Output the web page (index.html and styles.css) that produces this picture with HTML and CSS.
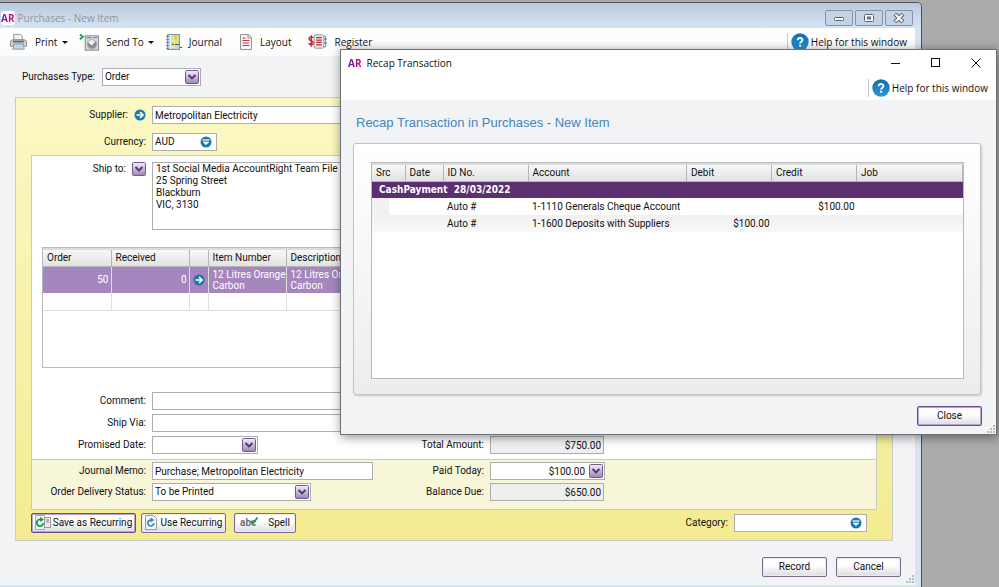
FILE: index.html
```html
<!DOCTYPE html>
<html lang="en">
<head>
<meta charset="utf-8">
<title>Purchases - New Item</title>
<link rel="stylesheet" href="styles.css">
</head>
<body>
<svg width="0" height="0" class="defs" aria-hidden="true">
  <defs>
    <linearGradient id="purple" x1="0" y1="0" x2="0" y2="1"><stop offset="0" stop-color="#f3eef8"/><stop offset="1" stop-color="#9d84b4"/></linearGradient>
    <linearGradient id="blue" x1="0" y1="0" x2="0" y2="1"><stop offset="0" stop-color="#0a6fb4"/><stop offset="1" stop-color="#2f95cf"/></linearGradient>
    <symbol id="chev" viewBox="0 0 14 14"><rect x=".5" y=".5" width="13" height="13" rx="1" fill="url(#purple)" stroke="#745b8e"/><path d="M3.500 5l3.500 3.500L10.500 5" fill="none" stroke="#4f3370" stroke-width="1.800"/></symbol>
    <symbol id="drop" viewBox="0 0 12 12"><circle cx="6" cy="6" r="5.500" fill="#1f78ad"/><path d="M2.500 4h7" stroke="#fff" stroke-width="1.200"/><path d="M3.200 6h5.600L6 8.800z" fill="#fff" stroke="#fff" stroke-width=".6"/></symbol>
    <symbol id="go" viewBox="0 0 12 12"><circle cx="6" cy="6" r="5.500" fill="#1f78ad"/><path d="M2.500 6h6M6 3l3 3-3 3" fill="none" stroke="#fff" stroke-width="1.700"/></symbol>
    <symbol id="help" viewBox="0 0 18 18"><circle cx="9" cy="9" r="8.700" fill="url(#blue)"/><path d="M6.700 7.200c.1-3 4.800-2.900 4.700-.2 0 1.700-2.300 1.700-2.300 3.600" fill="none" stroke="#fff" stroke-width="1.900"/><rect x="8.100" y="11.700" width="2" height="2" fill="#fff"/></symbol>
    <symbol id="grip" viewBox="0 0 8 8"><path d="M6 0h2v2H6zM3 3h2v2H3zM6 3h2v2H6zM0 6h2v2H0zM3 6h2v2H3zM6 6h2v2H6z" fill="#b9bbbd"/></symbol>
  </defs>
</svg>

<main class="window">
  <header class="titlebar">
    <span class="brand tile">AR</span>
    <h1>Purchases - New Item</h1>
    <div class="wincontrols">
      <button aria-label="Minimise"><svg width="12" height="10" viewBox="0 0 12 10"><rect x="1.500" y="4.500" width="9" height="3" rx="1" fill="#fff" stroke="#56606e"/></svg></button>
      <button aria-label="Maximise"><svg width="12" height="10" viewBox="0 0 12 10"><rect x="1.500" y="1.500" width="9" height="7" rx="1" fill="#fff" stroke="#56606e"/><rect x="4.500" y="4" width="3" height="2" fill="#8b98aa" stroke="#56606e"/></svg></button>
      <button aria-label="Close window"><svg width="12" height="10" viewBox="0 0 12 10"><path d="M2 1l8 8m0-8l-8 8" stroke="#56606e" stroke-width="4"/><path d="M2.500 1.500l7 7m0-7l-7 7" stroke="#fff" stroke-width="2"/></svg></button>
    </div>
  </header>

  <nav class="toolbar">
    <button class="menu"><svg width="19" height="18" viewBox="0 0 20 18"><path d="M5 7V1h7l2 2v4" fill="#f4f4f4" stroke="#8b8d8f"/><path d="M1.500 13.500V8L4 6.500h12L18.500 8v5.500z" fill="#d3d4d5" stroke="#8b8d90"/><path d="M4 8.500h12" stroke="#66696c" stroke-width="2"/><path d="M5 11h10l1 5.500H4z" fill="#b9d8ee" stroke="#8796a2"/></svg>Print<i class="caret"></i></button>
    <button class="menu send"><svg width="21" height="19" viewBox="0 0 22 19"><path d="M1 1l3 2.500L1 6" fill="none" stroke="#1aa34a" stroke-width="2"/><rect x="6.500" y="2.500" width="14" height="15" fill="#d9dadb" stroke="#85878a"/><path d="M8 4.500h5m2 0h4" stroke="#6d7073"/><circle cx="13.500" cy="11.500" r="5" fill="#eee" stroke="#a2a4a6"/><path d="M9 9l4 3 5-4c1 5-1 8-4.500 8S9 13 9 9z" fill="#8b8d90"/><circle cx="13.500" cy="10.500" r="1.500" fill="#fff"/></svg>Send To<i class="caret"></i></button>
    <button><svg width="17" height="18" viewBox="0 0 17 18"><rect x="2.500" y="1.500" width="12" height="15" fill="#b5dfe6" stroke="#7d989f"/><path d="M5.500 2v14" stroke="#f6fafa"/><path d="M1 3.500h3M1 6.500h3M1 9.500h3M1 12.500h3M1 15.500h3" stroke="#85878a"/><path d="M7 5h3M7 8h3M7 14h3" stroke="#eaf6f8"/><rect x="9" y="2" width="3" height="4" fill="#f0d21a"/><rect x="9" y="8" width="5" height="5" fill="#f8e52a"/><path d="M7 11.500h2m1 0h4m1 3h2" stroke="#555" stroke-width="1.200"/></svg>Journal</button>
    <button><svg width="14" height="18" viewBox="0 0 14 18"><path d="M1.500 1.500h8l3 3v12h-11z" fill="#f7f7f7" stroke="#919396"/><path d="M9 1.500V5h3" fill="none" stroke="#919396"/><path d="M3.500 5h3M3.500 7.500h7M3.500 10h7M3.500 12.500h7" stroke="#c63a45" stroke-width="1.200"/></svg>Layout</button>
    <button><svg width="19" height="18" viewBox="0 0 20 18"><path d="M5.500 5c-.5-2-4.500-1.800-4.500.5C1 8.200 5.700 7.200 5.700 10c0 2.400-4.400 2.500-4.900 0M3.400 2v12" fill="none" stroke="#c5232f" stroke-width="1.500"/><path d="M6.500 2.500l1-1h8l1 1v12l-1 1h-8l-1-1z" fill="#f4e9ea" stroke="#8b8d90"/><path d="M8.500 4.500h6M8.500 7h6M8.500 9.500h6M8.500 12h6" stroke="#c5232f" stroke-width="1.300"/><path d="M16.500 3h2v11h-2" fill="#ddd" stroke="#888"/><path d="M18.500 5v2m0 2v2" stroke="#3a83b4" stroke-width="2"/></svg>Register</button>
    <a class="help" href="#help"><svg width="18" height="18"><use href="#help"/></svg>Help for this window</a>
  </nav>

  <form class="content" onsubmit="return false">
    <div class="typerow">
      <label for="ptype">Purchases Type:</label>
      <span class="combo w-type"><select id="ptype"><option>Order</option></select><svg class="chev"><use href="#chev"/></svg></span>
    </div>

    <section class="panel">
      <div class="fields head">
        <label for="supplier">Supplier:<svg width="12" height="12"><use href="#go"/></svg></label>
        <input id="supplier" class="long" value="Metropolitan Electricity">
        <label for="currency">Currency:</label>
        <span class="combo w-cur"><select id="currency"><option>AUD</option></select><svg class="drop"><use href="#drop"/></svg></span>
      </div>

      <div class="sheet">
        <div class="fields ship">
          <label for="shipto">Ship to:<svg class="chev"><use href="#chev"/></svg></label>
          <textarea id="shipto" class="long">1st Social Media AccountRight Team File
25 Spring Street
Blackburn
VIC, 3130</textarea>
        </div>

        <div class="gridbox items">
          <table>
            <colgroup><col class="c68"><col class="c78"><col class="c19"><col class="c78"><col></colgroup>
            <thead><tr><th>Order</th><th>Received</th><th></th><th>Item Number</th><th>Description</th></tr></thead>
            <tbody>
              <tr class="sel"><td class="num">50</td><td class="num">0</td><td class="mid"><svg width="12" height="12"><use href="#go"/></svg></td><td>12 Litres Orange<br>Carbon</td><td>12 Litres Orange<br>Carbon</td></tr>
              <tr class="blank"><td></td><td></td><td></td><td></td><td></td></tr>
            </tbody>
          </table>
        </div>

        <div class="fields lower">
          <label for="comment">Comment:</label><input id="comment" class="span">
          <label for="via">Ship Via:</label><input id="via" class="span">
          <label for="promised">Promised Date:</label>
          <span class="combo w-date"><select id="promised"><option></option></select><svg class="chev"><use href="#chev"/></svg></span>
          <label for="total">Total Amount:</label><input id="total" class="money" readonly value="$750.00">
        </div>
      </div>

      <div class="fields memo">
        <label for="memo">Journal Memo:</label><input id="memo" value="Purchase; Metropolitan Electricity">
        <label for="paid">Paid Today:</label>
        <span class="combo w-paid"><input id="paid" value="$100.00"><svg class="chev"><use href="#chev"/></svg></span>
        <label for="status">Order Delivery Status:</label>
        <span class="combo w-status"><select id="status"><option>To be Printed</option></select><svg class="chev"><use href="#chev"/></svg></span>
        <label for="balance">Balance Due:</label><input id="balance" class="money" readonly value="$650.00">
      </div>

      <div class="actions">
        <button class="btn strong b-save"><svg width="16" height="16" viewBox="0 0 16 16"><path d="M.5.500h9v14h-9z" fill="#f3f5f5" stroke="#aaa"/><path d="M9.500 2.500h6v10h-6z" fill="#eee" stroke="#999"/><path d="M11 5h3M11 7h3" stroke="#777"/><path d="M5.500 4.500A3.300 3.300 0 1 0 8.300 8" fill="none" stroke="#15984b" stroke-width="1.800"/><path d="M5 2l4 2.500L5 7z" fill="#15984b"/></svg>Save as Recurring</button>
        <button class="btn b-use"><svg width="12" height="16" viewBox="0 0 12 16"><path d="M.5.500h8l3 3v11H.5z" fill="#f5f8fa" stroke="#999"/><path d="M6 5A3 3 0 1 0 8.800 8" fill="none" stroke="#3688bd" stroke-width="1.700"/><path d="M5.500 2.500l4 2.500-4 2.500z" fill="#3688bd"/></svg>Use Recurring</button>
        <button class="btn b-spell"><span class="abc">abc<svg width="8" height="8" viewBox="0 0 8 8"><path d="M1 4l2 2.500L7.500.5" fill="none" stroke="#15984b" stroke-width="1.600"/></svg></span>Spell</button>
        <label for="category">Category:</label>
        <span class="combo w-cat"><select id="category"><option></option></select><svg class="drop"><use href="#drop"/></svg></span>
      </div>
    </section>

    <footer class="foot">
      <button class="btn">Record</button>
      <button class="btn">Cancel</button>
      <svg class="grip" width="8" height="8"><use href="#grip"/></svg>
    </footer>
  </form>
</main>

<section class="dialog" role="dialog" aria-labelledby="dlgtitle">
  <header class="dlgbar">
    <span class="brand">AR</span>
    <h2 id="dlgtitle">Recap Transaction</h2>
    <div class="dlgcontrols">
      <button aria-label="Minimise"><svg width="10" height="10" viewBox="0 0 10 10"><path d="M0 5.500h9" stroke="#111"/></svg></button>
      <button aria-label="Maximise"><svg width="10" height="10" viewBox="0 0 10 10"><rect x=".5" y=".5" width="8" height="8" fill="none" stroke="#111"/></svg></button>
      <button aria-label="Close dialog"><svg width="10" height="10" viewBox="0 0 10 10"><path d="M.5.500l9 9m0-9l-9 9" stroke="#111"/></svg></button>
    </div>
  </header>
  <div class="dlghelp"><a class="help" href="#help"><svg width="18" height="18"><use href="#help"/></svg>Help for this window</a></div>
  <div class="dlgbody">
    <h3>Recap Transaction in Purchases - New Item</h3>
    <div class="card">
      <div class="gridbox recap">
        <table>
          <colgroup><col class="c33"><col class="c38"><col class="c85"><col><col class="c85"><col class="c85"><col class="c106"></colgroup>
          <thead><tr><th>Src</th><th>Date</th><th>ID No.</th><th>Account</th><th>Debit</th><th>Credit</th><th>Job</th></tr></thead>
          <tbody>
            <tr class="group"><th colspan="7" scope="rowgroup">CashPayment&nbsp; 28/03/2022</th></tr>
            <tr><td class="stub"></td><td></td><td>Auto #</td><td>1-1110 Generals Cheque Account</td><td></td><td class="num">$100.00</td><td></td></tr>
            <tr class="alt"><td class="stub"></td><td></td><td>Auto #</td><td>1-1600 Deposits with Suppliers</td><td class="num">$100.00</td><td></td><td></td></tr>
          </tbody>
        </table>
      </div>
    </div>
    <footer class="dlgfoot">
      <button class="btn strong">Close</button>
      <svg class="grip" width="8" height="8"><use href="#grip"/></svg>
    </footer>
  </div>
</section>
</body>
</html>
```
FILE: styles.css
```css
* { box-sizing: border-box; }

body {
  margin: 0;
  min-height: 100vh;
  padding: 2px 77px 0 0;
  background: #ababab;
  color: #111;
  font: 10px/12px Roboto, sans-serif;
  white-space: nowrap;
  overflow: hidden;
}

h1, h2, h3 { margin: 0; font-weight: 400; }
svg { display: block; flex: none; }
.defs { position: absolute; }
button, input, select, textarea { font: inherit; color: inherit; margin: 0; }
button { cursor: pointer; }

/* Main window */
.window {
  border: 1px solid #4d5358;
  border-width: 1px 1px 0 0;
  border-radius: 0 5px 0 0;
  background: #d6e4f2;
  padding: 0 6px 3px 0;
}

.titlebar, .toolbar, .dlgbar, .dlghelp { font-family: "Open Sans", sans-serif; }

.titlebar {
  display: flex;
  align-items: center;
  height: 25px;
  padding: 4px 1px 0 1px;
  margin-right: -6px;
  border-radius: 0 4px 0 0;
  background: linear-gradient(#b9cade, #d6e4f2);
}
.titlebar h1 { flex: 1; margin-left: 3px; color: #8f969e; font-size: 10px; line-height: 14px; }

.brand {
  font: 700 10px/14px "Open Sans", sans-serif;
  background: linear-gradient(90deg, #5a1fa8, #e5097f);
  -webkit-background-clip: text;
  background-clip: text;
  color: transparent;
}
.tile { background: linear-gradient(90deg, #5a1fa8, #e5097f) text, #fff; border-radius: 3px; }

.wincontrols { display: flex; gap: 2px; padding-right: 7px; }
.wincontrols button {
  display: grid;
  place-items: center;
  width: 28px;
  height: 16px;
  padding: 0;
  border: 1px solid #8394ab;
  border-radius: 2px;
  background: #c3d2e4;
}

.toolbar {
  display: flex;
  align-items: center;
  height: 28px;
  padding: 0 8px 0 9px;
  background: linear-gradient(#fff, #fbfbfc);
}
.toolbar button {
  display: flex;
  align-items: center;
  gap: 7px;
  padding: 0;
  margin-right: 17px;
  border: 0;
  background: none;
}
.toolbar .menu { margin-right: 11px; }
.toolbar .send { gap: 6px; }
.caret { border: 3px solid transparent; border-top-color: #111; border-bottom: 0; margin-left: -2px; }

.help {
  display: flex;
  align-items: center;
  gap: 2px;
  margin-left: auto;
  padding-left: 3px;
  border-left: 1px solid #c5c7ca;
  color: inherit;
  text-decoration: none;
}

.content { background: #f2f3f5; padding: 12px 22px 0 15px; }
.typerow { display: flex; align-items: center; gap: 7px; padding-left: 7px; margin-bottom: 11px; }

/* Form controls */
input, textarea, .combo {
  border: 1px solid #abadb3;
  border-radius: 0;
  background: #fff;
  height: 18px;
  padding: 0 2px;
}
textarea { display: block; height: 68px; padding: 0 3px; resize: none; overflow: hidden; }
.combo { display: grid; align-items: center; padding: 0 1px 0 0; }
.combo > * { grid-area: 1 / 1; }
.combo select, .combo input {
  appearance: none;
  width: 100%;
  height: 16px;
  padding: 0 2px;
  border: 0;
  background: none;
}
.combo svg { justify-self: end; pointer-events: none; }
.chev { width: 14px; height: 14px; }
.drop { width: 12px; height: 12px; margin-right: 3px; }
.money { width: 114px; text-align: right; background: #efeff0; }
.w-type { width: 99px; }
.w-cur { width: 65px; }
.w-date { width: 106px; }
.w-status { width: 159px; }
.w-paid { width: 115px; }
.w-cat { width: 133px; }
.combo.w-paid input { text-align: right; padding-right: 18px; }

/* Yellow entry panel */
.panel {
  padding: 8px 15px 7px;
  border: 1px solid #c9cacb;
  background: linear-gradient(#fbf8c4, #f3ec92);
}
.fields { display: grid; align-items: center; grid-template-columns: 114px 221px 105px 1fr; column-gap: 6px; }
.fields label { display: flex; justify-content: flex-end; align-items: center; gap: 6px; }
.long, .span { grid-column: 2 / -1; }
.head { padding-left: 1px; row-gap: 9px; margin-bottom: 4px; }
.head label:nth-of-type(2) { grid-column: 1; }

.sheet { padding: 6px 0 5px; border: 1px solid #c9cacb; background: #fff; }
.ship label { align-self: start; }
.ship { margin-bottom: 17px; }
.lower { row-gap: 4px; }

.gridbox { border: 1px solid #b8b9bb; background: #fff; }
.items { height: 121px; margin: 0 10px 24px; overflow: hidden; }
table { width: 100%; border-collapse: collapse; table-layout: fixed; }
th, td { padding: 0 4px; text-align: left; font-weight: 400; vertical-align: middle; }
thead th {
  height: 17px;
  line-height: 11px;
  background: linear-gradient(#f7f7f7, #e2e2e3);
  border: 1px solid #b4b5b7;
  border-width: 2px 1px 1px 0;
  border-top-color: #dcdcdd;
}
.items td { border: 1px solid #dfdfe0; border-width: 0 1px 1px 0; }
.items .sel td { height: 27px; background: #a586bd; color: #fff; line-height: 11px; border-bottom: 0; }
.items .blank td { height: 17px; }
.items .num { padding-right: 2px; }
.num { text-align: right; }
.items .mid { padding: 0 3px; }
.c19 { width: 19px; }
.c33 { width: 33px; }
.c38 { width: 38px; }
.c68 { width: 68px; }
.c78 { width: 78px; }
.c85 { width: 85px; }
.c106 { width: 106px; }

.memo { padding: 2px 1px 8px 0; row-gap: 3px; border: 1px solid #c9cacb; border-top: 0; background: #f8f6d9; }

.actions { display: flex; align-items: center; padding-right: 10px; margin-top: 3px; }
.actions label { margin: 0 6px 0 auto; }
.btn {
  display: flex;
  align-items: center;
  justify-content: center;
  height: 20px;
  padding: 0 3px;
  border: 1px solid #7d6a93;
  border-radius: 2px;
  background: linear-gradient(#fff 40%, #dcdde1);
  box-shadow: inset 0 0 0 1px #ece9f0;
}
.strong { border-color: #6c4595; box-shadow: inset 0 0 0 1px #b9a3cf; }
.b-save { width: 105px; gap: 2px; margin-right: 5px; }
.b-use { width: 85px; gap: 4px; margin-right: 8px; }
.b-spell { width: 62px; gap: 10px; }
.abc { display: flex; color: #6d6f72; font-weight: 700; }
.abc svg { margin-left: -6px; }

.foot { position: relative; display: flex; justify-content: flex-end; gap: 9px; padding: 16px 0 8px; margin-right: -8px; }
.foot .btn, .dlgfoot .btn { width: 65px; }
.grip { position: absolute; right: 0; bottom: 2px; }
.foot .grip { right: -13px; }

/* Recap dialog, floating above the main window */
.dialog {
  position: absolute;
  top: 49px;
  left: 340px;
  right: 2px;
  border: 1px solid #6d6f72;
  background: #fff;
  box-shadow: 1px 2px 10px rgba(0, 0, 0, .45);
}
.dlgbar { display: flex; align-items: center; height: 26px; padding: 0 15px 0 7px; }
.dlgbar h2 { flex: 1; margin-left: 5px; font-size: 10px; line-height: 14px; }
.dlgcontrols { display: flex; gap: 30px; }
.dlgcontrols button { padding: 0; border: 0; background: none; }
.dlghelp { display: flex; height: 24px; padding: 3px 8px 3px 0; }
.dlgbody { padding: 15px 15px 8px 12px; background: #f2f3f5; }
.dlgbody h3 { margin: 0 0 12px 3px; color: #4486bd; font: 13px/16px "Liberation Sans", Arial, sans-serif; }
.card {
  padding: 18px 16px 15px 17px;
  border: 1px solid #c4c5c7;
  border-radius: 3px;
  background: linear-gradient(#fff, #ededed);
  box-shadow: 1px 1px 2px #c8c9cb;
}
.recap { height: 217px; }
.recap td { height: 17px; }
.recap .group th { height: 17px; padding-left: 7px; background: #5c2f70; color: #fff; font: 700 10px/12px "DejaVu Sans Condensed", "DejaVu Sans", sans-serif; }
.recap .alt td { background: linear-gradient(#f1f1f1, #f8f8f8); }
.recap .stub { background: linear-gradient(90deg, #f1f1f1 50%, #fff 50%); }
.recap .num { padding-right: 2px; }
.dlgfoot { position: relative; display: flex; justify-content: flex-end; padding-top: 11px; margin-right: -1px; }
.dlgfoot .grip { right: -13px; bottom: -7px; }
```
